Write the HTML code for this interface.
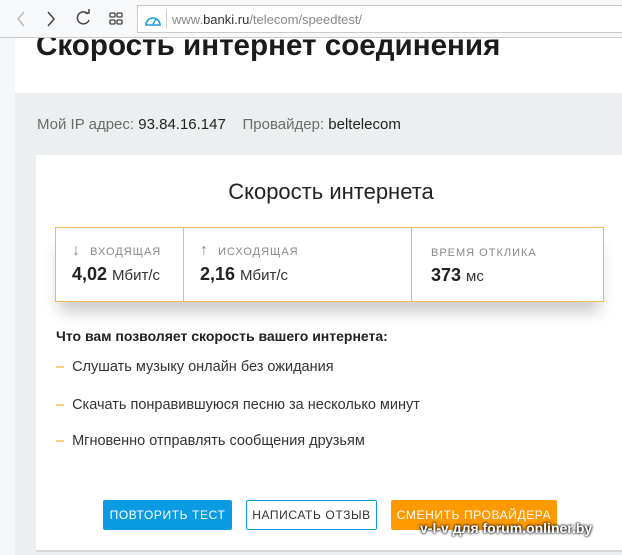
<!DOCTYPE html>
<html><head><meta charset="utf-8"><style>
*{margin:0;padding:0;box-sizing:border-box}
body{width:622px;height:555px;overflow:hidden;background:#fff;font-family:"Liberation Sans","DejaVu Sans",sans-serif;position:relative}
.bar{position:absolute;left:0;top:0;width:622px;height:38px;background:#f7f8fa;border-bottom:1px solid #c9cbcd;z-index:5}
.addr{position:absolute;left:137px;top:5px;width:500px;height:28px;background:#fff;border:1px solid #c8cacc;font-size:13px;color:#888;padding:6px 0 0 34px}
.addr b{font-weight:normal;color:#333}
.leftstrip{position:absolute;left:0;top:38px;width:15px;height:517px;background:#f5f6f8}
.title{position:absolute;left:36px;top:29px;font-size:29.6px;font-weight:bold;color:#1b1b1b}
.gray{position:absolute;left:15px;top:93px;width:607px;height:462px;background:#eceff0}
.ip{position:absolute;left:37px;top:116px;font-size:15px;color:#6b6b6b}
.ip span{color:#222}
.card{position:absolute;left:36px;top:155px;width:590px;height:395px;background:#fff}
.h2{position:absolute;left:36px;top:179px;width:590px;text-align:center;font-size:22px;color:#222}
.stats{position:absolute;left:55px;top:227px;width:549px;height:75px;border:1px solid #f5b94a;background:#fff;box-shadow:0 14px 14px -4px rgba(0,0,0,0.2);display:flex}
.st{border-right:1px solid #f5b94a;padding:17px 0 0 16px;height:100%}
.st:last-child{border-right:none}
.lab{font-size:11px;color:#888;letter-spacing:1px}
.ar{display:inline-block;width:10px;font-size:16px;font-weight:bold;color:#888;line-height:11px}
.val{font-size:18px;font-weight:bold;color:#222;margin-top:6px}
.val small{font-weight:normal;font-size:15px;color:#333}
.q{position:absolute;left:56px;top:328px;font-size:14px;font-weight:bold;color:#222}
.li{position:absolute;left:56px;font-size:14.5px;color:#333}
.li i{font-style:normal;color:#f39800;margin-right:8px}
.btn{position:absolute;top:500px;height:30px;font-size:12px;letter-spacing:0.6px;text-align:center;line-height:30px;border-radius:2px}
.wm{position:absolute;left:420px;top:520px;font-size:14px;font-weight:bold;color:#fff;text-shadow:0 0 3px #000,0 0 2px #000}
</style></head><body>
<div class="leftstrip"></div>
<div class="gray"></div>
<div class="title">Скорость интернет соединения</div>
<div class="bar">
<svg width="130" height="38" style="position:absolute;left:0;top:0">
<path d="M24 12 L18 19 L24 26" stroke="#bbb" stroke-width="1.5" fill="none"/>
<path d="M48 12 L54 19 L48 26" stroke="#444" stroke-width="1.5" fill="none"/>
<path d="M88 14 A6 6 0 1 0 89 20" stroke="#444" stroke-width="1.5" fill="none"/><path d="M85 13 L89 13 L89 9" stroke="#444" stroke-width="1.5" fill="none"/>
<rect x="110" y="13" width="5" height="4" rx="1" stroke="#444" fill="none" stroke-width="1.3"/><rect x="117" y="13" width="5" height="4" rx="1" stroke="#444" fill="none" stroke-width="1.3"/><rect x="110" y="20" width="5" height="4" rx="1" stroke="#444" fill="none" stroke-width="1.3"/><rect x="117" y="20" width="5" height="4" rx="1" stroke="#444" fill="none" stroke-width="1.3"/>
</svg>
<div class="addr"><svg width="20" height="14" style="position:absolute;left:6px;top:7px"><path d="M2 12 A7 7 0 1 1 16 12 Z" stroke="#1a9be0" stroke-width="1.6" fill="none"/><path d="M9 11 L12 6" stroke="#1a9be0" stroke-width="1.5"/></svg><div style="position:absolute;left:28px;top:4px;width:1px;height:18px;background:#ccc"></div>www.<b>banki.ru</b>/telecom/speedtest/</div>
</div>
<div class="ip">Мой IP адрес: <span>93.84.16.147</span>&nbsp;&nbsp;&nbsp; Провайдер: <span>beltelecom</span></div>
<div class="card"></div>
<div class="h2">Скорость интернета</div>
<div class="stats">
<div class="st" style="width:128px"><div class="lab"><span class="ar">↓</span>&nbsp; ВХОДЯЩАЯ</div><div class="val">4,02 <small>Мбит/с</small></div></div>
<div class="st" style="width:228px"><div class="lab"><span class="ar">↑</span>&nbsp; ИСХОДЯЩАЯ</div><div class="val">2,16 <small>Мбит/с</small></div></div>
<div class="st" style="width:190px;padding-left:19px"><div class="lab" style="padding-top:2px">ВРЕМЯ ОТКЛИКА</div><div class="val">373 <small>мс</small></div></div>
</div>
<div class="q">Что вам позволяет скорость вашего интернета:</div>
<div class="li" style="top:359px"><i>–</i>Слушать музыку онлайн без ожидания</div>
<div class="li" style="top:397px"><i>–</i>Скачать понравившуюся песню за несколько минут</div>
<div class="li" style="top:433px"><i>–</i>Мгновенно отправлять сообщения друзьям</div>
<div class="btn" style="left:103px;width:129px;background:#0b9be3;color:#fff">ПОВТОРИТЬ ТЕСТ</div>
<div class="btn" style="left:246px;width:131px;border:1px solid #0b9be3;color:#333;line-height:28px">НАПИСАТЬ ОТЗЫВ</div>
<div class="btn" style="left:391px;width:166px;background:#ff9900;color:#fff">СМЕНИТЬ ПРОВАЙДЕРА</div>
<div style="position:absolute;left:36px;top:550px;width:586px;height:2px;background:#d5d8da"></div>
<div class="wm">v-l-v для forum.onliner.by</div>
</body></html>
